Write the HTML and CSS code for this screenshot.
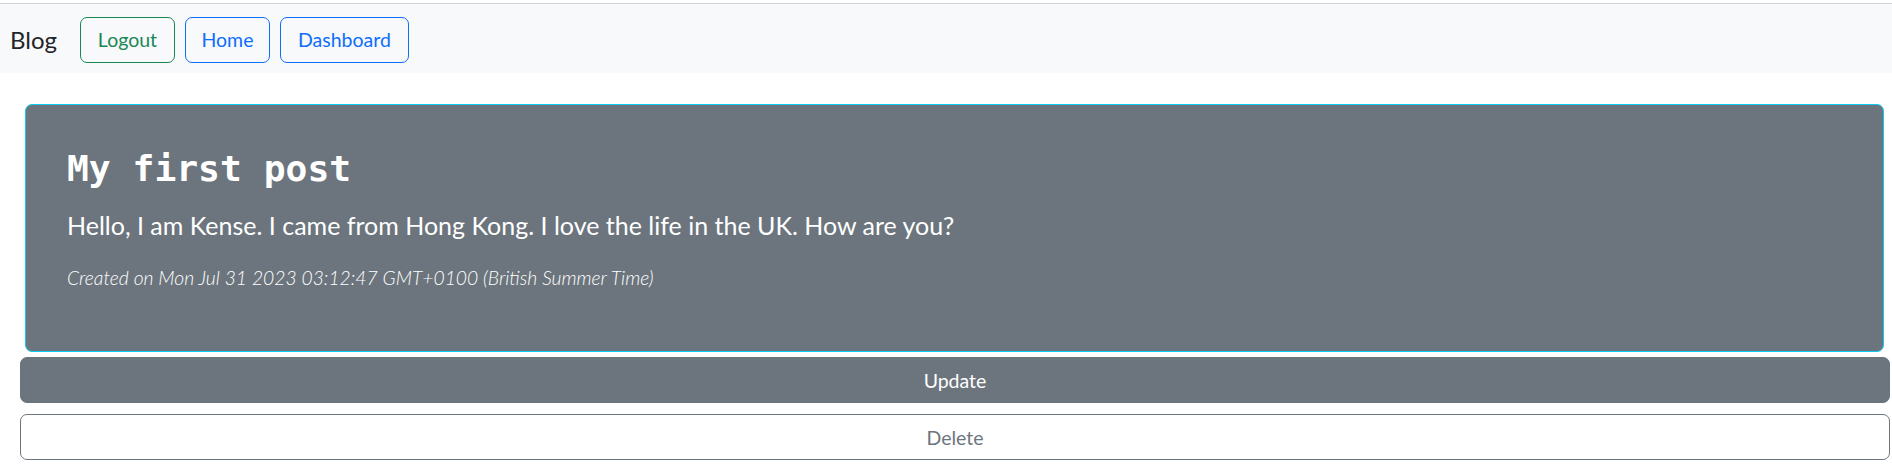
FILE: index.html
```html
<!DOCTYPE html>
<html lang="en">
<head>
<meta charset="utf-8">
<title>Blog</title>
<link rel="stylesheet" href="styles.css">
</head>
<body>
<div class="topgap"></div>
<nav class="navbar">
  <span class="brand">Blog</span>
  <a class="btn btn-success-outline btn-logout">Logout</a>
  <a class="btn btn-primary-outline btn-home">Home</a>
  <a class="btn btn-primary-outline btn-dashboard">Dashboard</a>
</nav>
<main class="main">
  <div class="card">
    <h1 class="title">My first post</h1>
    <p class="lead">Hello, I am Kense. I came from Hong Kong. I love the life in the UK. How are you?</p>
    <p class="meta">Created on Mon Jul 31 2023 03:12:47 GMT+0100 (British Summer Time)</p>
  </div>
  <div class="actions">
    <button class="wide wide-update">Update</button>
    <button class="wide wide-delete">Delete</button>
  </div>
</main>
</body>
</html>
```
FILE: styles.css
```css
* { box-sizing: border-box; }
html, body { margin: 0; padding: 0; background: #fff; }
body {
  font-family: Lato, "Open Sans", sans-serif;
  color: #212529;
}
.topgap {
  height: 4px;
  border-bottom: 1px solid #d3d3d3;
  background: #fff;
}
.navbar {
  display: flex;
  align-items: center;
  height: 69px;
  background: #f8f9fa;
  padding: 2px 0 0 10px;
}
.brand {
  font-size: 24px;
  margin-right: 23px;
  color: #212529;
}
.btn {
  display: inline-flex;
  align-items: center;
  justify-content: center;
  height: 46px;
  padding: 0;
  border-radius: 7px;
  border: 1px solid;
  font-size: 19.5px;
  margin-right: 10px;
  text-decoration: none;
}
.btn-success-outline { color: #198754; border-color: #198754; }
.btn-primary-outline { color: #0d6efd; border-color: #0d6efd; }
.btn-logout { width: 95px; }
.btn-home { width: 85px; }
.btn-dashboard { width: 129px; }
.main {
  padding: 31px 2px 0 20px;
}
.card {
  margin: 0 6px 0 5px;
  height: 248px;
  background: #6c757d;
  border: 1px solid #0dcaf0;
  border-radius: 7px;
  padding: 42px 40px 0 41px;
  color: #fff;
}
.title {
  margin: 0 0 16px 0;
  font-family: "DejaVu Sans Mono", "Liberation Mono", monospace;
  font-weight: bold;
  font-size: 36.3px;
  line-height: 1.2;
}
.lead {
  margin: 0 0 20px 0;
  font-size: 25px;
  line-height: 1.5;
}
.meta {
  margin: 0;
  font-style: italic;
  font-weight: 300;
  font-size: 19.3px;
  line-height: 1.5;
  color: #fff;
}
.actions {
  display: flex;
  flex-direction: column;
  gap: 11px;
  margin-top: 5px;
}
.wide {
  height: 46px;
  width: 100%;
  border-radius: 7px;
  font-family: Lato, "Open Sans", sans-serif;
  font-size: 19.5px;
  cursor: pointer;
}
.wide-update {
  background: #6c757d;
  border: 1px solid #6c757d;
  color: #fff;
}
.wide-delete {
  background: #fff;
  border: 1px solid #6c757d;
  color: #6c757d;
}
```
